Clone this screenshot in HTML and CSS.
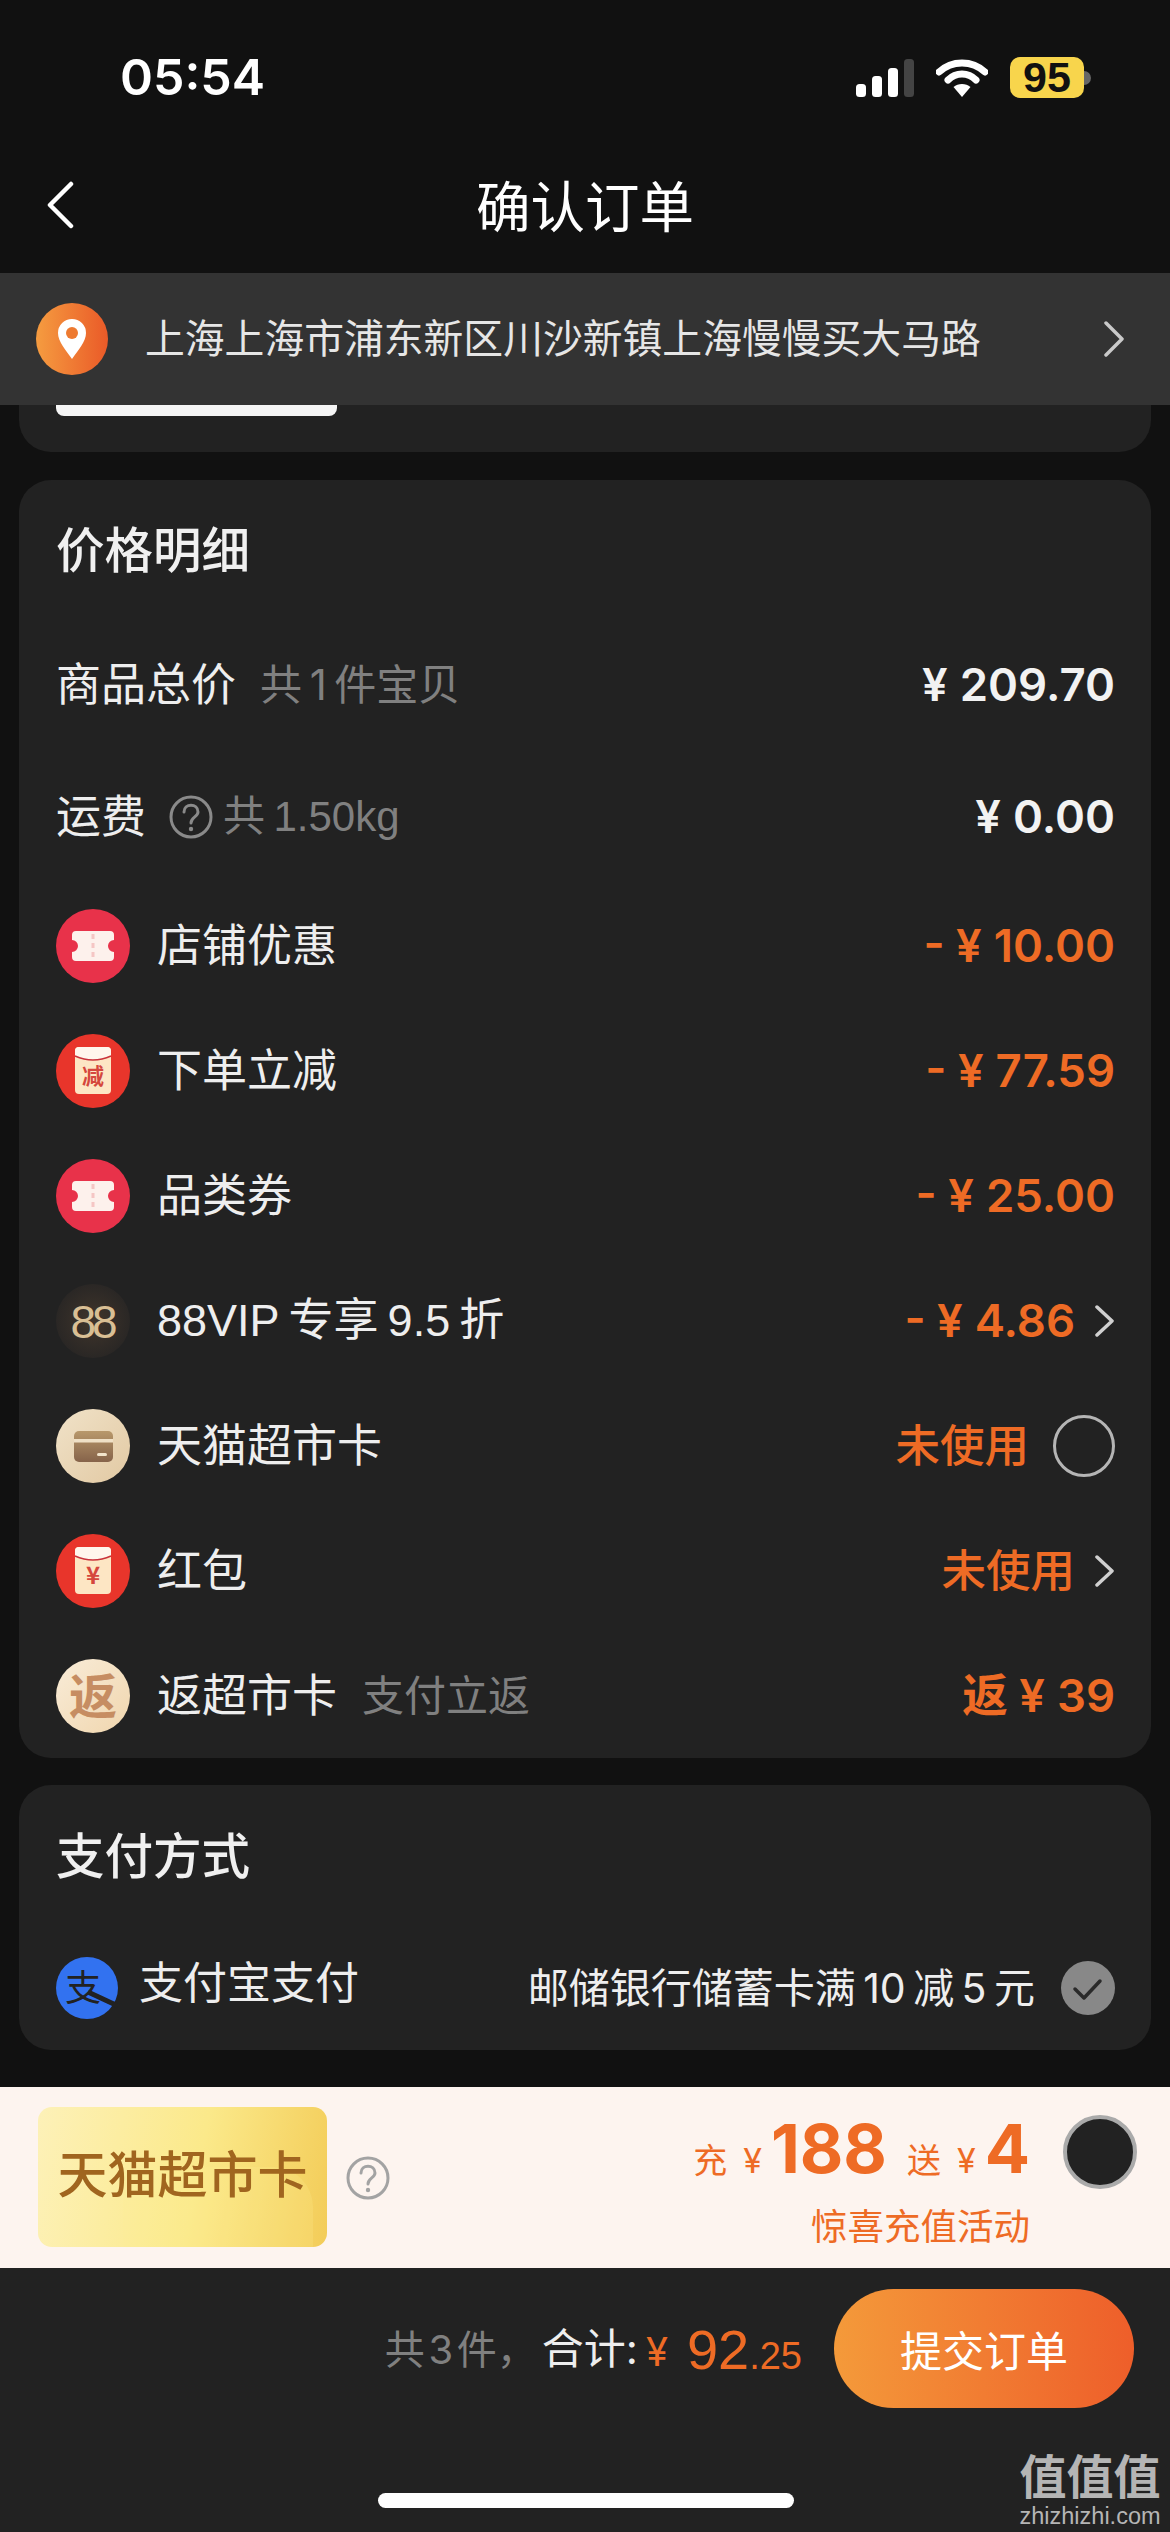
FILE: index.html
```html
<!DOCTYPE html>
<html lang="zh-CN">
<head>
<meta charset="utf-8">
<title>确认订单</title>
<link rel="stylesheet" href="styles.css">
</head>
<body>
<div class="page">
  <header class="status">
    <span class="time">05:54</span>
    <div class="status-icons">
      <svg class="signal" width="60" height="38" viewBox="0 0 60 38"><rect x="0" y="25" width="10" height="13" rx="3.5" fill="#fff"/><rect x="16" y="17" width="10" height="21" rx="3.5" fill="#fff"/><rect x="32" y="9" width="10" height="29" rx="3.5" fill="#fff"/><rect x="48" y="0" width="10" height="38" rx="3.5" fill="#444"/></svg>
      <svg class="wifi" width="52" height="38" viewBox="0 0 52 38"><path d="M3 13 C16 1 36 1 49 13" fill="none" stroke="#fff" stroke-width="7" stroke-linecap="round"/><path d="M12 21 C20 13 32 13 40 21" fill="none" stroke="#fff" stroke-width="7" stroke-linecap="round"/><path d="M26 38 L17.500 28 C22 24 30 24 34.500 28 Z" fill="#fff"/></svg>
      <div class="battery"><span class="battery-level">95</span><span class="battery-nub"></span></div>
    </div>
  </header>
  <nav class="nav">
    <svg class="back" width="30" height="48" viewBox="0 0 30 48"><path d="M26 3 L5 24 L26 45" fill="none" stroke="#fff" stroke-width="4.500" stroke-linecap="round" stroke-linejoin="round"/></svg>
    <h1 class="nav-title">确认订单</h1>
  </nav>
  <div class="address">
    <svg class="pin" width="72" height="72" viewBox="0 0 72 72"><defs><linearGradient id="g-pin" x1="0" x2="1" y1="0" y2="0"><stop offset="0" stop-color="#f59c40"/><stop offset="1" stop-color="#ea5a28"/></linearGradient></defs><circle cx="36" cy="36" r="36" fill="url(#g-pin)"/><path d="M36 56 C30 47 22 39 22 30 A14 14 0 0 1 50 30 C50 39 42 47 36 56 Z" fill="#fff"/><circle cx="36" cy="30" r="6" fill="#ee7a30"/></svg>
    <span class="address-text">上海上海市浦东新区川沙新镇上海慢慢买大马路</span>
    <svg class="chev chev-addr" width="22" height="36" viewBox="0 0 22 36"><path d="M3 2 L19 18 L3 34" fill="none" stroke="#c9c9c9" stroke-width="3.500" stroke-linecap="round" stroke-linejoin="round"/></svg>
  </div>
  <main class="content">
    <div class="prev-card"><div class="strip"></div></div>
    <section class="card price-card">
      <h2 class="card-title">价格明细</h2>
      <div class="row row-plain"><div class="label">商品总价<span class="note note-first">共&#8201;1&#8201;件宝贝</span></div><span class="amount white"><span class="yen">¥</span>209.70</span></div>
      <div class="row row-plain"><div class="label">运费
        <svg class="help help-row" width="44" height="44" viewBox="0 0 44 44"><circle cx="22" cy="22" r="20" fill="none" stroke="#8a8a8a" stroke-width="3"/><path d="M15 17 C15 8 29 8 29 17 C29 22 22 22 22 28" fill="none" stroke="#8a8a8a" stroke-width="3" stroke-linecap="round"/><circle cx="22" cy="34" r="2.200" fill="#8a8a8a"/></svg>
        <span class="note note-latin">共&#8201;1.50kg</span></div><span class="amount white"><span class="yen">¥</span>0.00</span></div>

      <div class="row"><div class="label"><svg class="ico" width="74" height="74" viewBox="0 0 74 74"><circle cx="37" cy="37" r="37" fill="#e8324a"/><path d="M20 22 H54 Q58 22 58 26 V31 A6 6 0 0 0 58 43 V48 Q58 52 54 52 H20 Q16 52 16 48 V43 A6 6 0 0 0 16 31 V26 Q16 22 20 22 Z" fill="#fdf1ec"/><path d="M37 25 V50" stroke="#f5c6c4" stroke-width="3" stroke-dasharray="5 4"/></svg>店铺优惠</div><span class="amount">- <span class="yen">¥</span>10.00</span></div>

      <div class="row"><div class="label"><svg class="ico" width="74" height="74" viewBox="0 0 74 74"><circle cx="37" cy="37" r="37" fill="#e8352b"/><rect x="19" y="13" width="36" height="47" rx="4" fill="#fde6c4"/><path d="M19 17 Q19 13 23 13 H51 Q55 13 55 17 V22 Q37 30 19 22 Z" fill="#fff6ec"/><path d="M19 22 Q37 30 55 22" fill="none" stroke="#c9323a" stroke-width="1.500"/><text x="37" y="50" class="ico-glyph ico-bold" font-size="22" fill="#d5473d">减</text></svg>下单立减</div><span class="amount">- <span class="yen">¥</span>77.59</span></div>

      <div class="row"><div class="label"><svg class="ico" width="74" height="74" viewBox="0 0 74 74"><circle cx="37" cy="37" r="37" fill="#e8324a"/><path d="M20 22 H54 Q58 22 58 26 V31 A6 6 0 0 0 58 43 V48 Q58 52 54 52 H20 Q16 52 16 48 V43 A6 6 0 0 0 16 31 V26 Q16 22 20 22 Z" fill="#fdf1ec"/><path d="M37 25 V50" stroke="#f5c6c4" stroke-width="3" stroke-dasharray="5 4"/></svg>品类券</div><span class="amount">- <span class="yen">¥</span>25.00</span></div>

      <div class="row"><div class="label"><svg class="ico" width="74" height="74" viewBox="0 0 74 74"><defs><radialGradient id="g-88" cx=".5" cy=".5" r=".5"><stop offset="0" stop-color="#40352b"/><stop offset="1" stop-color="#2a2725"/></radialGradient></defs><circle cx="37" cy="37" r="37" fill="url(#g-88)"/><text x="36" y="54" class="ico-glyph ico-88" font-size="46">88</text></svg><span class="vip">88VIP&#8201;专享&#8201;9.5&#8201;折</span></div><div class="right"><span class="amount">- <span class="yen">¥</span>4.86</span><svg class="chev" width="20" height="32" viewBox="0 0 20 32"><path d="M2 2 L17 16 L2 30" fill="none" stroke="#d0d0d0" stroke-width="3.500" stroke-linecap="round" stroke-linejoin="round"/></svg></div></div>

      <div class="row"><div class="label"><svg class="ico" width="74" height="74" viewBox="0 0 74 74"><defs><linearGradient id="g-cream" x1="0" x2="1" y1="0" y2="1"><stop offset="0" stop-color="#f0e2c8"/><stop offset="1" stop-color="#e2c9a3"/></linearGradient><linearGradient id="g-brown" x1="0" x2="0" y1="0" y2="1"><stop offset="0" stop-color="#b8986b"/><stop offset="1" stop-color="#86634a"/></linearGradient></defs><circle cx="37" cy="37" r="37" fill="url(#g-cream)"/><rect x="18" y="22" width="39" height="31" rx="5" fill="url(#g-brown)"/><rect x="18" y="30" width="39" height="3.500" fill="#efe0c6"/><rect x="41" y="44" width="10" height="3" rx="1.500" fill="#f2e4cc"/></svg>天猫超市卡</div><div class="right right-wide"><span class="amount cjk">未使用</span><span class="radio"></span></div></div>

      <div class="row"><div class="label"><svg class="ico" width="74" height="74" viewBox="0 0 74 74"><circle cx="37" cy="37" r="37" fill="#e8352b"/><rect x="19" y="13" width="36" height="47" rx="4" fill="#fde6c4"/><path d="M19 17 Q19 13 23 13 H51 Q55 13 55 17 V22 Q37 30 19 22 Z" fill="#fff6ec"/><path d="M19 22 Q37 30 55 22" fill="none" stroke="#c9323a" stroke-width="1.500"/><text x="37" y="50" class="ico-glyph ico-bold" font-size="24" fill="#d5473d">¥</text></svg>红包</div><div class="right"><span class="amount cjk">未使用</span><svg class="chev" width="20" height="32" viewBox="0 0 20 32"><path d="M2 2 L17 16 L2 30" fill="none" stroke="#d0d0d0" stroke-width="3.500" stroke-linecap="round" stroke-linejoin="round"/></svg></div></div>

      <div class="row"><div class="label"><svg class="ico" width="74" height="74" viewBox="0 0 74 74"><defs><linearGradient id="g-back" x1="0" x2="1" y1="0" y2="1"><stop offset="0" stop-color="#f9ecd8"/><stop offset="1" stop-color="#f0d6ae"/></linearGradient></defs><circle cx="37" cy="37" r="37" fill="url(#g-back)"/><text x="37" y="55" class="ico-glyph ico-bold" font-size="48" fill="#c68d62">返</text></svg>返超市卡<span class="note note-back">支付立返</span></div><span class="amount"><span class="cjk-inline">返</span> <span class="yen">¥</span>39</span></div>
    </section>

    <section class="card pay-card">
      <h2 class="card-title pay-title">支付方式</h2>
      <div class="pay-row">
        <svg class="ali" width="62" height="62" viewBox="0 0 62 62"><circle cx="31" cy="31" r="31" fill="#3272f0"/><text x="27" y="44" class="ico-glyph" font-size="36" fill="#222">支</text><path d="M32 35 L62 49" stroke="#222" stroke-width="5"/></svg>
        <span class="pay-name">支付宝支付</span>
        <span class="pay-promo">邮储银行储蓄卡满&#8201;10&#8201;减&#8201;5&#8201;元</span>
        <svg class="check" width="54" height="54" viewBox="0 0 54 54"><circle cx="27" cy="27" r="27" fill="#888"/><path d="M14 28 L23 37 L39 20" fill="none" stroke="#2a2a2a" stroke-width="3.500" stroke-linecap="round" stroke-linejoin="round"/></svg>
      </div>
    </section>
  </main>

  <section class="banner">
    <div class="gold"><span class="gold-text">天猫超市卡</span></div>
    <svg class="help" width="44" height="44" viewBox="0 0 44 44"><circle cx="22" cy="22" r="20" fill="none" stroke="#a3a3a3" stroke-width="3"/><path d="M15 17 C15 8 29 8 29 17 C29 22 22 22 22 28" fill="none" stroke="#a3a3a3" stroke-width="3" stroke-linecap="round"/><circle cx="22" cy="34" r="2.200" fill="#a3a3a3"/></svg>
    <div class="promo">
      <div class="promo-line"><span class="promo-small">充</span><span class="promo-yen">¥</span><span class="promo-big">188</span><span class="promo-small promo-gift">送</span><span class="promo-yen">¥</span><span class="promo-big">4</span></div>
      <div class="promo-sub">惊喜充值活动</div>
    </div>
    <span class="toggle"></span>
  </section>

  <footer class="bottom">
    <div class="checkout">
      <div class="total"><span class="total-count">共&#8202;3&#8202;件，</span><span class="total-label">合计:</span><span class="total-yen">¥</span><span class="total-int">92</span><span class="total-dec">.25</span></div>
      <button class="submit">提交订单</button>
    </div>
    <div class="home"></div>
    <div class="watermark"><span class="wm-cn">值值值</span><span class="wm-en">zhizhizhi.com</span></div>
  </footer>
</div>
</body>
</html>
```
FILE: styles.css
```css
* { box-sizing: border-box; }
html, body { margin: 0; padding: 0; }
body {
  background: #111;
  font-family: Inter, "Noto Sans CJK SC", sans-serif;
  color: #eee;
}
.page {
  width: 1170px;
  height: 2532px;
  display: flex;
  flex-direction: column;
  overflow: hidden;
  background: #111;
}

/* status bar */
.status {
  height: 144px;
  padding: 0 79px 0 120px;
  display: flex;
  justify-content: space-between;
  align-items: flex-start;
}
.time {
  margin-top: 47px;
  font-size: 50px;
  line-height: 60px;
  font-weight: 600;
  color: #fff;
}
.status-icons {
  margin-top: 57px;
  display: flex;
  align-items: center;
  gap: 20px;
}
.battery {
  display: flex;
  align-items: center;
  margin-left: 2px;
}
.battery-level {
  width: 74px;
  height: 41px;
  background: #f8d54c;
  border-radius: 10px;
  color: #111;
  font-family: "Liberation Sans", sans-serif;
  font-weight: 700;
  font-size: 43px;
  line-height: 41px;
  text-align: center;
}
.battery-nub {
  width: 7px;
  height: 14px;
  background: #666;
  border-radius: 0 7px 7px 0;
}

/* nav */
.nav {
  height: 129px;
  position: relative;
  display: flex;
  align-items: center;
  justify-content: center;
}
.back { position: absolute; left: 45px; top: 37px; }
.nav-title {
  margin: 0 0 3px;
  font-size: 54.500px;
  line-height: 70px;
  font-weight: 400;
  color: #fff;
}

/* address */
.address {
  height: 132px;
  background: #333;
  display: flex;
  align-items: center;
  padding: 0 45px 0 36px;
  flex: none;
}
.address-text {
  margin-left: 37px;
  font-size: 39.800px;
  line-height: 50px;
  color: #e6e6e6;
  flex: 1;
  white-space: nowrap;
}

/* content */
.content {
  padding: 0 19px;
  display: flex;
  flex-direction: column;
}
.prev-card {
  height: 47px;
  background: #222;
  border-radius: 0 0 32px 32px;
  padding-left: 37px;
  margin-bottom: 28px;
}
.strip {
  width: 281px;
  height: 11px;
  background: #f5f5f5;
  border-radius: 0 0 8px 8px;
}
.card {
  background: #222;
  border-radius: 32px;
  padding: 0 36px 0 37px;
}
.price-card { height: 1278px; margin-bottom: 27px; }
.pay-card { height: 265px; }
.card-title {
  margin: 0;
  height: 139px;
  padding-bottom: 6px;
  display: flex;
  align-items: center;
  font-size: 48.500px;
  font-weight: 500;
  color: #f0f0f0;
}
.pay-title { height: 142px; }
.row {
  height: 125px;
  display: flex;
  align-items: center;
  justify-content: space-between;
}
.row-plain { height: 132px; }
.label {
  display: flex;
  align-items: center;
  font-size: 45px;
  line-height: 60px;
  color: #eee;
}
.ico { margin-right: 27px; flex: none; }
.ico-glyph {
  font-family: "Noto Sans CJK SC", sans-serif;
  text-anchor: middle;
}
.ico-bold { font-weight: 700; }
.ico-88 {
  font-family: "Liberation Sans", sans-serif;
  fill: #d9bf94;
  letter-spacing: -4px;
}
.vip {
  white-space: pre;
  font-family: "Liberation Sans", "Noto Sans CJK SC", sans-serif;
}
.note {
  font-size: 42px;
  color: #808080;
  margin-left: 10px;
}
.note-latin { font-family: "Liberation Sans", "Noto Sans CJK SC", sans-serif; }
.note-first { margin-left: 24px; }
.note-back { margin-left: 25px; }
.help-row { margin-left: 23px; }
.amount {
  font-size: 45.500px;
  font-weight: 600;
  color: #ee6b25;
  line-height: 60px;
  white-space: pre;
}
.yen { margin-right: 12px; }
.amount.white { color: #f2f2f2; }
.amount.cjk { font-size: 44.500px; font-weight: 500; }
.right {
  display: flex;
  align-items: center;
  gap: 20px;
}
.right-wide { gap: 24px; }
.radio {
  width: 62px;
  height: 62px;
  border: 3px solid #b5b5b5;
  border-radius: 50%;
}
.chev { flex: none; }

/* pay */
.pay-row {
  display: flex;
  align-items: center;
  height: 62px;
  margin-top: 30px;
}
.pay-name {
  margin-left: 21px;
  font-size: 44px;
  line-height: 60px;
  margin-bottom: 10px;
  color: #eee;
}
.pay-promo {
  margin-left: auto;
  font-size: 41px;
  line-height: 60px;
  white-space: pre;
  color: #eee;
}
.check { margin-left: 26px; }

/* banner */
.banner {
  margin-top: 37px;
  height: 181px;
  background: #fdf4ef;
  display: flex;
  align-items: center;
  padding: 0 33px 0 38px;
  flex: none;
}
.gold {
  width: 289px;
  height: 140px;
  margin-top: -2px;
  border-radius: 14px;
  background: linear-gradient(100deg, #fdf1b8 0%, #fbe98a 55%, #f3cc58 100%);
  display: flex;
  align-items: center;
  justify-content: center;
  position: relative;
  overflow: hidden;
}
.gold::after {
  content: "";
  position: absolute;
  left: 85px;
  top: 60px;
  width: 190px;
  height: 80px;
  border-radius: 20px 40px 0 0;
  background: rgba(255, 240, 150, .2);
}
.gold-text {
  position: relative;
  z-index: 1;
  font-size: 50px;
  font-weight: 500;
  color: #a0651f;
  line-height: 60px;
  white-space: nowrap;
  margin-bottom: 4px;
}
.banner .help { margin-left: 19px; }
.promo {
  margin-left: auto;
  padding-top: 8px;
  display: flex;
  flex-direction: column;
  align-items: flex-end;
}
.promo-line {
  display: flex;
  align-items: baseline;
  color: #ee6b25;
  height: 74px;
}
.promo-small { font-size: 34px; }
.promo-yen { font-size: 34px; margin-left: 16px; margin-right: 9px; }
.promo-big { font-size: 67px; font-weight: 700; line-height: 74px; }
.promo-gift { margin-left: 20px; }
.promo-sub {
  font-size: 36.500px;
  line-height: 50px;
  color: #ee6b25;
  margin-top: 16px;
}
.toggle {
  width: 74px;
  height: 74px;
  margin-left: 33px;
  margin-top: -51px;
  border-radius: 50%;
  background: #222;
  border: 4px solid #aaa;
  flex: none;
}

/* bottom */
.bottom {
  position: relative;
  flex: 1;
  background: #222;
  padding: 21px 36px 0 0;
}
.checkout {
  display: flex;
  justify-content: flex-end;
  align-items: center;
  gap: 32px;
}
.total { white-space: pre; }
.total-count { font-size: 40px; color: #808080; vertical-align: 5px; }
.total-label { font-size: 42px; color: #eee; vertical-align: 5px; margin-left: 5px; }
.total-yen { font-size: 40px; color: #ee6b25; margin: 0 16px 0 8px; vertical-align: 3px; }
.total-int { font-size: 56px; color: #ee6b25; font-family: "Liberation Sans", sans-serif; margin-left: 3px; }
.total-dec { font-size: 38px; color: #ee6b25; font-family: "Liberation Sans", sans-serif; }
.submit {
  width: 300px;
  height: 119px;
  border: 0;
  border-radius: 60px;
  background: linear-gradient(90deg, #f49a3a, #ee5e2a);
  color: #fff;
  font-family: inherit;
  font-size: 42px;
  padding: 0;
}
.home {
  width: 416px;
  height: 15px;
  margin: 85px 0 0 378px;
  background: #fff;
  border-radius: 8px;
}
.watermark {
  position: absolute;
  left: 1020px;
  top: 183px;
  width: 140px;
  display: flex;
  flex-direction: column;
  align-items: center;
  color: #b5b5b5;
}
.wm-cn {
  font-size: 47px;
  line-height: 52px;
  font-weight: 700;
  white-space: nowrap;
}
.wm-en {
  font-family: "Liberation Sans", sans-serif;
  font-size: 23.500px;
  line-height: 26px;
  white-space: nowrap;
}
```
